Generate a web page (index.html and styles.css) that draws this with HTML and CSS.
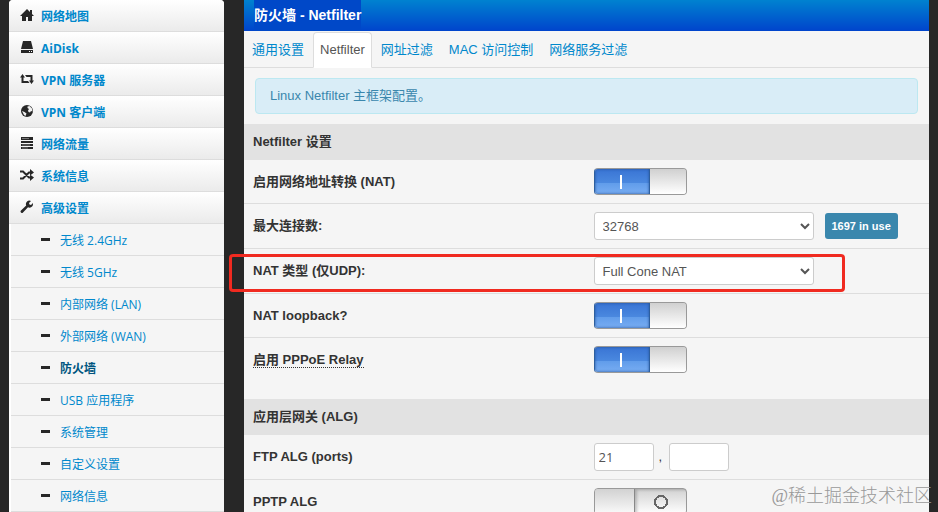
FILE: index.html
```
<!DOCTYPE html>
<html lang="zh-CN">
<head>
<meta charset="utf-8">
<title>防火墙 - Netfilter</title>
<link rel="stylesheet" href="styles.css">
</head>
<body>
<div class="wrapper">

<ul class="menu">
 <li><a href="#"><svg class="icon" viewBox="0 0 14 14"><path d="M7 1L0 8h2v5h4V9h2v4h4V8h2l-2-2V2h-2v2z"/></svg>网络地图</a></li>
 <li><a href="#"><svg class="icon" viewBox="0 0 14 14"><path d="M3 1h8l2 8H1zM1 10h12v3H1z"/><path d="M9 11h1v1H9zM11 11h1v1h-1z" fill="#fff"/></svg>AiDisk</a></li>
 <li><a href="#"><svg class="icon" viewBox="0 0 14 14"><path d="M2.500 2L5 5.500H3.500V9H8l1.500 2H1.500V5.500H0zM5 3h7.500v5.500H14L11.500 12 9 8.500h1.500V5h-4z"/></svg>VPN 服务器</a></li>
 <li><a href="#"><svg class="icon" viewBox="0 0 14 14"><circle cx="7" cy="7" r="6"/><path d="M7.500 2.500l2-.5 2.500 2.500.5 3-1.500-.5-1 1.500-1.500-.5-.5-1.500L9 5 7.500 4zM2 7l2.500 1 2 1.500-1 2.500L4 11z" fill="#f0f0f0"/></svg>VPN 客户端</a></li>
 <li><a href="#"><svg class="icon" viewBox="0 0 14 14"><path d="M1 1h12v12H1z"/><path d="M1 4.500h12M1 7.500h12M1 10.500h12" stroke="#f5f5f5"/><path d="M2 2.500h7M2 9h8M2 12h6" stroke="#aaa" stroke-width=".6"/></svg>网络流量</a></li>
 <li><a href="#"><svg class="icon" viewBox="0 0 14 14"><path d="M0 3.500h3l6 6h3M0 10.500h3l6-6h3" fill="none" stroke="#272727" stroke-width="2"/><path d="M10 1l4 3.500-4 3zM10 6.500l4 3-4 3.500z"/></svg>系统信息</a></li>
 <li><a href="#"><svg class="icon" viewBox="0 0 14 14"><path d="M13 4a3.500 3.500 0 0 1-5 3.300L3 12.400a1.400 1.400 0 0 1-2-2L6.200 5.500A3.500 3.500 0 0 1 11 1L9 3l.5 1.500L11 5l2-2z"/></svg>高级设置</a>
  <ul class="submenu">
   <li><a href="#">无线 2.4GHz</a></li>
   <li><a href="#">无线 5GHz</a></li>
   <li><a href="#">内部网络 (LAN)</a></li>
   <li><a href="#">外部网络 (WAN)</a></li>
   <li><a href="#" class="current">防火墙</a></li>
   <li><a href="#">USB 应用程序</a></li>
   <li><a href="#">系统管理</a></li>
   <li><a href="#">自定义设置</a></li>
   <li><a href="#">网络信息</a></li>
  </ul>
 </li>
</ul>

<div class="box">
 <h2><span>防火墙 - Netfilter</span></h2>

 <div class="tabs">
  <a href="#">通用设置</a>
  <a href="#" class="active">Netfilter</a>
  <a href="#">网址过滤</a>
  <a href="#">MAC 访问控制</a>
  <a href="#">网络服务过滤</a>
 </div>

 <div class="alert">Linux Netfilter 主框架配置。</div>

 <form>
 <h3>Netfilter 设置</h3>
 <table>
  <tr>
   <th><label for="nat">启用网络地址转换 (NAT)</label></th>
   <td><input type="checkbox" class="switch" id="nat" checked></td>
  </tr>
  <tr>
   <th><label for="nf_max_conn">最大连接数:</label></th>
   <td><div class="controls"><select id="nf_max_conn"><option>32768</option></select><span class="badge">1697 in use</span></div></td>
  </tr>
  <tr class="marked">
   <th><label for="nf_nat_type">NAT 类型 (仅UDP):</label></th>
   <td><div class="controls"><select id="nf_nat_type"><option>Full Cone NAT</option></select></div></td>
  </tr>
  <tr>
   <th><label for="nat_loop">NAT loopback?</label></th>
   <td><input type="checkbox" class="switch" id="nat_loop" checked></td>
  </tr>
  <tr>
   <th><label for="pppoe_relay" class="help">启用 PPPoE Relay</label></th>
   <td><input type="checkbox" class="switch" id="pppoe_relay" checked></td>
  </tr>
 </table>

 <h3>应用层网关 (ALG)</h3>
 <table>
  <tr>
   <th><label for="ftp0">FTP ALG (ports)</label></th>
   <td><div class="controls ports"><input type="text" id="ftp0" value="21"><span>,</span><input type="text" id="ftp1" aria-label="FTP ALG port 2"></div></td>
  </tr>
  <tr>
   <th><label for="pptp">PPTP ALG</label></th>
   <td><input type="checkbox" class="switch" id="pptp"></td>
  </tr>
 </table>
 </form>
</div>

<div class="watermark">@稀土掘金技术社区</div>
</div>
</body>
</html>
```
FILE: styles.css
```
*{box-sizing:border-box;}
body{margin:0;background-color:#272727;color:#333;font:13px/20px "Liberation Sans","Noto Sans CJK SC",sans-serif;}
ul{margin:0;padding:0;list-style:none;}
a{color:#0088cc;text-decoration:none;}
.wrapper{position:relative;display:flex;align-items:flex-start;gap:20px;height:100vh;padding:0 9px;overflow:hidden;}

/* left menu */
.menu{flex:0 0 215px;background-color:#fff;border-radius:4px 4px 0 0;font:12px/20px "Open Sans","Noto Sans CJK SC",sans-serif;}
.menu a{display:flex;align-items:center;height:32px;padding:3px 11px 0;border-bottom:1px solid #ddd;font-weight:bold;background-image:linear-gradient(#fff,#ebebeb);}
.menu > li:first-child > a{border-radius:4px 4px 0 0;}
.icon{width:14px;height:14px;margin:0 7px 5px 0;fill:#272727;}
.submenu{padding-left:2px;}
.menu .submenu a{padding-left:30px;background:#f5f5f5;font-weight:normal;}
.submenu a:before{content:"";width:9px;height:3px;margin:0 10px 3px 0;background-color:#272727;}
.menu .submenu a.current{color:#005580;font-weight:bold;}

/* content */
.box{flex:1;min-width:0;background-color:#f5f5f5;}
h2{margin:0;padding-left:10px;height:31px;font-size:14px;line-height:31px;color:#fff;background:linear-gradient(#0082d0,#0044cc);}
h2 span{display:inline-block;background-color:#0048c8;}
.tabs{display:flex;height:37px;padding:1px 0 0 1px;border-bottom:1px solid #ddd;}
.tabs a{height:36px;margin-right:2px;padding:7px 6px;border:1px solid transparent;border-radius:4px 4px 0 0;white-space:nowrap;}
.tabs a.active{color:#555;background-color:#fff;border-color:#ddd;border-bottom-color:#fff;}
.alert{margin:10px 11px;padding:7px 14px;border:1px solid #bce8f1;border-radius:4px;background-color:#d9edf7;color:#3a87ad;}
h3{margin:0;padding:8px 9px;font-size:13px;line-height:20px;background-color:#e2e2e2;}

table{width:100%;margin-bottom:18px;border-collapse:separate;border-spacing:0;table-layout:fixed;}
th,td{width:50%;padding:8px 7px;border-bottom:1px solid #ddd;text-align:left;vertical-align:middle;}
th{padding-left:9px;}
tr:last-child th,tr:last-child td{border-bottom:0;}
.help{border-bottom:1px dotted #333;}
.controls{display:flex;align-items:center;gap:11px;}
.ports{gap:5px;}
.ports span{width:5px;}
select,input[type=text]{height:28px;margin:0;border:1px solid #ccc;border-radius:3px;background-color:#fff;color:#555;font:13px/20px "Liberation Sans",sans-serif;}
select{width:220px;padding:0 4px;}
input[type=text]{width:60px;padding:0 4px;font:13px/20px "Open Sans",sans-serif;}
.badge{padding:3px 7px;border-radius:3px;background-color:#3a87ad;color:#fff;font-size:11px;font-weight:bold;white-space:nowrap;}

/* on/off switch */
.switch{appearance:none;display:flex;width:93px;height:27px;margin:0;border:1px solid #999;border-radius:4px;background:linear-gradient(#d2d2d2,#fff);overflow:hidden;}
.switch:before,.switch:after{content:"";height:25px;}
.switch:before{width:39px;border-right:1px solid #888;background:linear-gradient(#d2d2d2,#fafafa);}
.switch:after{flex:1;background:radial-gradient(circle at 26px 13px,transparent 5px,#666 5px,#666 7px,transparent 7px);box-shadow:inset 2px 1px 3px rgba(0,0,0,.2);}
.switch:checked:before{width:54px;border-right:1px solid #2d5f9f;background:linear-gradient(#fff,#fff) 25px 6px/2px 14px no-repeat,linear-gradient(#3974d4,#4a88df 54%,#609cea 55%,#78adf2);box-shadow:inset 0 0 3px #24549a;}
.switch:checked:after{background:linear-gradient(#d0d0d0,#fff);box-shadow:none;}
.switch:checked{border-left-color:#2d5f9f;}

/* highlight frame round the row */
.marked{position:relative;}
.marked th:before{content:"";position:absolute;top:5px;bottom:2px;left:-15px;right:84px;border:3px solid #f02a20;border-radius:4px;pointer-events:none;}

.watermark{position:absolute;right:6px;bottom:4px;color:#999;font:18px/24px "Liberation Serif","Noto Sans CJK SC",serif;font-weight:300;}
```
